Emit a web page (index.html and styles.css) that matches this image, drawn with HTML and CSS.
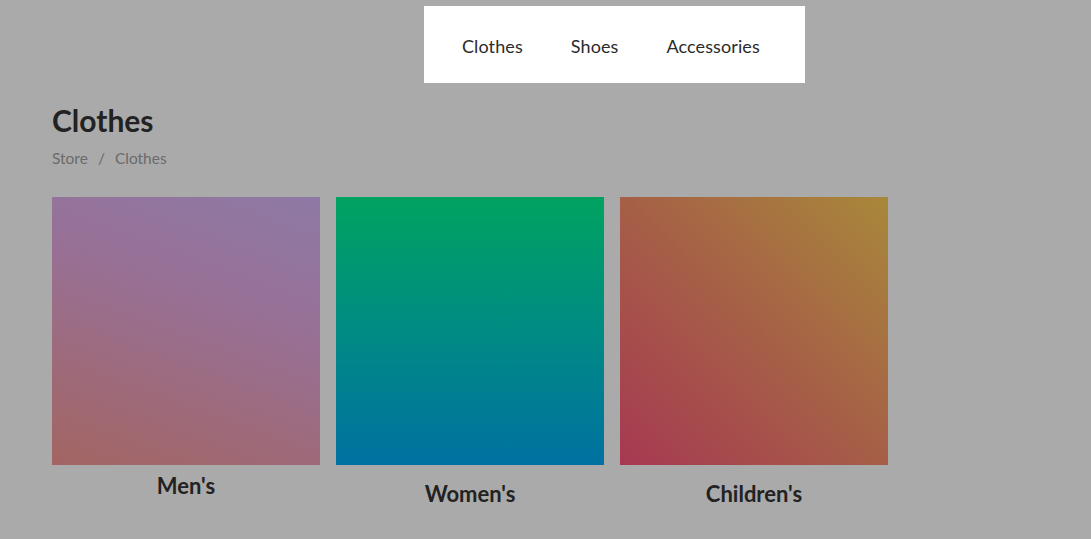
FILE: index.html
```html
<!DOCTYPE html>
<html lang="en">
<head>
<meta charset="utf-8">
<title>Clothes</title>
<link rel="stylesheet" href="styles.css">
</head>
<body>
<header class="topbar">
  <nav class="menu">
    <a class="menu-item" href="#">Clothes</a>
    <a class="menu-item" href="#">Shoes</a>
    <a class="menu-item" href="#">Accessories</a>
  </nav>
</header>
<main class="page">
  <h1 class="title">Clothes</h1>
  <div class="crumbs"><span>Store</span><span class="sep">/</span><span>Clothes</span></div>
  <section class="grid">
    <a class="card card-men" href="#">
      <div class="swatch swatch-men"></div>
      <div class="label">Men's</div>
    </a>
    <a class="card" href="#">
      <div class="swatch swatch-women"></div>
      <div class="label label-low">Women's</div>
    </a>
    <a class="card" href="#">
      <div class="swatch swatch-children"></div>
      <div class="label label-low">Children's</div>
    </a>
  </section>
</main>
</body>
</html>
```
FILE: styles.css
```css
* { box-sizing: border-box; }
html, body { margin: 0; padding: 0; }
body {
  background: #aaaaaa;
  font-family: "Lato", "Open Sans", "Liberation Sans", sans-serif;
  color: #222222;
  width: 1091px;
  height: 539px;
  overflow: hidden;
}
.topbar {
  display: flex;
  padding-top: 6px;
  padding-left: 424px;
}
.menu {
  display: flex;
  align-items: center;
  background: #ffffff;
  height: 77px;
  padding: 3px 21px 0 14px;
}
.menu-item {
  display: block;
  padding: 0 24px;
  font-size: 18px;
  color: #2b2b2b;
  text-decoration: none;
  letter-spacing: 0.1px;
}
.page {
  padding: 0 52px;
}
.title {
  margin: 19px 0 0;
  font-size: 30px;
  font-weight: 700;
  line-height: 36px;
  color: #222222;
}
.crumbs {
  margin-top: 10px;
  font-size: 15.5px;
  line-height: 20px;
  color: #6b6b6b;
  display: flex;
}
.crumbs .sep { padding: 0 10px; }
.grid {
  margin-top: 29px;
  display: flex;
  gap: 16px;
}
.card {
  display: flex;
  flex-direction: column;
  width: 268px;
  text-decoration: none;
  color: #222222;
}
.swatch { width: 268px; height: 268px; }
.swatch-men { background: linear-gradient(20deg, #a36562 0%, #987095 60%, #8e7aa5 100%); }
.swatch-women { background: linear-gradient(180deg, #00a360 0%, #008b84 50%, #0071a1 100%); }
.swatch-children { background: linear-gradient(45deg, #a63952 0%, #a65f47 50%, #a8883a 100%); }
.label {
  text-align: center;
  font-size: 22px;
  font-weight: 700;
  line-height: 26px;
  margin-top: 8px;
}
.label-low { margin-top: 16px; }
```
